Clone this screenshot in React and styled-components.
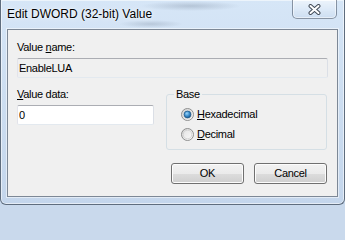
import { useId } from 'react';
import styled, { createGlobalStyle } from 'styled-components';

const GlobalStyle = createGlobalStyle`
  html, body {
    margin: 0;
    padding: 0;
    background: #c9d9ec;
  }
  body {
    font-family: "Liberation Sans", Arial, sans-serif;
  }
`

const Window = styled.div`
  box-sizing: border-box;
  width: 345px;
  height: 205px;
  display: flex;
  flex-direction: column;
  border: 1px solid #5f6d7e;
  border-top: none;
  border-radius: 0 0 6px 6px;
  background:
    radial-gradient(ellipse 50px 5px at 190px 6px, rgba(120, 135, 155, 0.35), transparent),
    radial-gradient(ellipse 32px 4px at 150px 24px, rgba(120, 135, 155, 0.3), transparent),
    linear-gradient(180deg, #d6e6f7 0%, #cddef1 45%, #c4d6ec 100%);
  box-shadow: inset 0 0 0 1px rgba(255, 255, 255, 0.55);
`

const TitleBar = styled.div`
  height: 29px;
  flex: none;
  display: flex;
  align-items: flex-start;
  justify-content: space-between;
`

const Title = styled.span`
  font-size: 12px;
  line-height: 29px;
  padding-left: 6px;
  color: #000;
  text-shadow: 0 0 6px rgba(255, 255, 255, 0.9), 0 0 2px #fff;
`

const CloseButton = styled.div`
  box-sizing: border-box;
  width: 45px;
  height: 19px;
  margin-right: 7px;
  display: flex;
  align-items: center;
  justify-content: center;
  border: 1px solid rgba(70, 85, 105, 0.6);
  border-top: none;
  border-radius: 0 0 5px 5px;
  background: linear-gradient(180deg, rgba(255, 255, 255, 0.55) 0%, rgba(255, 255, 255, 0.2) 50%, rgba(190, 208, 232, 0.35) 100%);
  box-shadow: inset 0 0 0 1px rgba(255, 255, 255, 0.5);
`

const Client = styled.div`
  flex: 1;
  margin: 0 6px 7px 6px;
  border: 1px solid #7d8896;
  background: #f0f0f0;
  padding: 11px 9px 0 9px;
  display: flex;
  flex-direction: column;
  box-shadow: 0 0 0 1px rgba(255, 255, 255, 0.5);
  font-size: 11px;
  line-height: 13px;
  letter-spacing: -0.3px;
  color: #000;
`

const Label = styled.div`
  height: 13px;
  margin-bottom: 4px;
  white-space: nowrap;
`

const TextBox = styled.input`
  box-sizing: border-box;
  height: 20px;
  width: ${({ $width }) => $width || '100%'};
  margin: 0 0 ${({ $gap }) => $gap || 0}px 0;
  padding: 0 0 0 1px;
  border: 1px solid;
  border-color: #abadb3 #dbdfe6 #e3e9ef #e2e3ea;
  border-radius: 2px;
  background: ${({ readOnly }) => (readOnly ? '#f0f0f0' : '#fff')};
  font: inherit;
  letter-spacing: inherit;
  color: #000;
  outline: none;
`

const Row = styled.div`
  display: flex;
  align-items: flex-start;
`

const Column = styled.div`
  width: 137px;
  display: flex;
  flex-direction: column;
`

const GroupBox = styled.fieldset`
  box-sizing: border-box;
  width: 161px;
  min-width: 0;
  margin: 0 0 0 12px;
  padding: 0 0 5px 7px;
  border: 1px solid #d5dfe5;
  border-radius: 3px;
`

const Legend = styled.legend`
  padding: 0 2px;
  height: 13px;
`

const RadioList = styled.div`
  padding: 3px 0 0 7px;
  display: flex;
  flex-direction: column;
`

const RadioRow = styled.label`
  height: 20px;
  display: flex;
  align-items: center;
  gap: 3px;
`

const ButtonRow = styled.div`
  margin-top: 13px;
  padding-right: 1px;
  display: flex;
  justify-content: flex-end;
  gap: 10px;
`

const Button = styled.button`
  box-sizing: border-box;
  width: 73px;
  height: 21px;
  padding: 0;
  border: 1px solid #707070;
  border-radius: 3px;
  background: linear-gradient(180deg, #f2f2f2 0%, #ebebeb 50%, #dddddd 51%, #cfcfcf 100%);
  box-shadow: inset 0 0 0 1px #fcfcfc;
  font: inherit;
  letter-spacing: inherit;
  color: #000;
`

function RadioMark({ checked }) {
  const id = useId()
  return (
    <svg width="13" height="13" viewBox="0 0 13 13">
      <defs>
        <linearGradient id={`${id}o`} x1="0" y1="0" x2="1" y2="1">
          <stop offset="0" stopColor="#d2d2d2" />
          <stop offset="1" stopColor="#ffffff" />
        </linearGradient>
        <linearGradient id={`${id}i`} x1="0" y1="0" x2="1" y2="1">
          <stop offset="0" stopColor="#e4e4e4" />
          <stop offset="1" stopColor="#f8f8f8" />
        </linearGradient>
        <radialGradient id={`${id}d`} cx="0.4" cy="0.35" r="0.7">
          <stop offset="0" stopColor="#9ad6fb" />
          <stop offset="0.55" stopColor="#3b8ccb" />
          <stop offset="1" stopColor="#174f80" />
        </radialGradient>
      </defs>
      <circle cx="6.5" cy="6.5" r="6" fill={`url(#${id}o)`} stroke="#8e8f8f" />
      <circle cx="6.5" cy="6.5" r="4.3" fill={`url(#${id}i)`} stroke="#cfcfcf" strokeWidth="0.8" />
      {checked && <circle cx="6.5" cy="6.5" r="3.4" fill={`url(#${id}d)`} stroke="#1f5a8c" strokeWidth="0.8" />}
    </svg>
  )
}

function App() {
  return (
    <>
      <GlobalStyle />
      <Window>
        <TitleBar>
          <Title>Edit DWORD (32-bit) Value</Title>
          <CloseButton>
            <svg width="13" height="11" viewBox="0 0 13 11">
              <path d="M2.5 2 L10.5 9 M10.5 2 L2.5 9" stroke="#434c58" strokeWidth="4" strokeLinecap="round" />
              <path d="M2.5 2 L10.5 9 M10.5 2 L2.5 9" stroke="#fff" strokeWidth="2" strokeLinecap="round" />
            </svg>
          </CloseButton>
        </TitleBar>
        <Client>
          <Label>Value <u>n</u>ame:</Label>
          <TextBox readOnly value="EnableLUA" $gap={10} />
          <Row>
            <Column>
              <Label><u>V</u>alue data:</Label>
              <TextBox defaultValue="0" $width="137px" />
            </Column>
            <GroupBox>
              <Legend>Base</Legend>
              <RadioList>
                <RadioRow>
                  <RadioMark checked />
                  <span><u>H</u>exadecimal</span>
                </RadioRow>
                <RadioRow>
                  <RadioMark />
                  <span><u>D</u>ecimal</span>
                </RadioRow>
              </RadioList>
            </GroupBox>
          </Row>
          <ButtonRow>
            <Button>OK</Button>
            <Button>Cancel</Button>
          </ButtonRow>
        </Client>
      </Window>
    </>
  );
}

export default App;
